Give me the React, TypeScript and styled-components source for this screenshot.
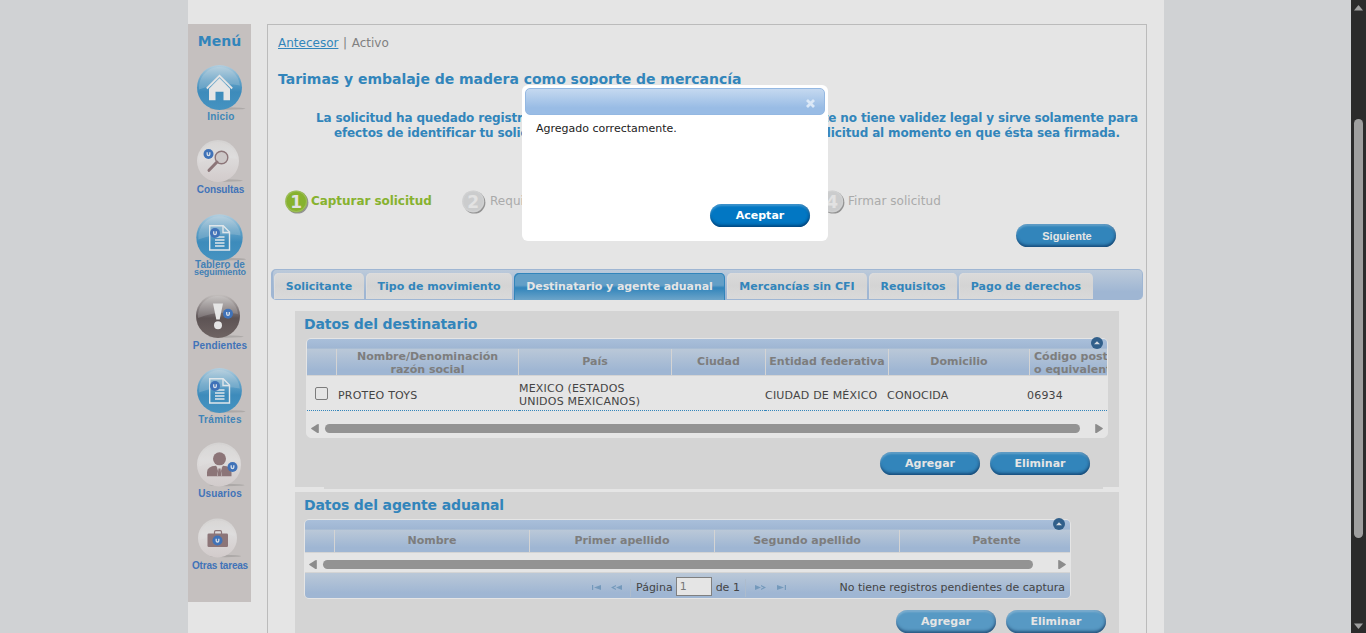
import React from 'react';
import styled, { createGlobalStyle, css } from 'styled-components';

const Global = createGlobalStyle`
  * { box-sizing: border-box; }
  html, body { margin: 0; padding: 0; overflow: hidden; }
  body { font-family: Verdana, "DejaVu Sans", sans-serif; font-size: 11px; color: #444; }
`;

const BLUE = '#3285bb';

const Page = styled.div`
  display: grid;
  grid-template-columns: 188px 976px 187px 15px;
  width: 1366px;
  height: 633px;
  overflow: hidden;
  background: #d0d2d4;
`;
const Container = styled.div`
  grid-column: 2;
  display: flex;
  align-items: flex-start;
  gap: 16px;
  height: 633px;
  padding-top: 24px;
  background: #e5e5e5;
`;
const Menu = styled.nav`
  width: 63px;
  height: 578px;
  flex: none;
  background: #c5c0bf;
`;
const MenuTitle = styled.div`
  height: 38px;
  line-height: 35px;
  text-align: center;
  font-weight: bold;
  font-size: 14px;
  color: ${BLUE};
`;
const MenuItem = styled.a<{ $h: number }>`
  display: block;
  height: ${p => p.$h}px;
`;
const MenuLabel = styled.div<{ $ls?: number; $tone?: string; $up?: number; $dx?: number }>`
  font: bold 10px/10px "Liberation Sans", Arial, sans-serif;
  letter-spacing: ${p => p.$ls ?? 0.3}px;
  color: ${p => p.$tone ?? '#4173b8'};
  text-align: center;
  white-space: nowrap;
  margin-top: ${p => -(p.$up ?? 0)}px;
  padding-left: ${p => p.$dx ?? 1}px;
`;
const SmallLine = styled.div`
  font-size: 9px;
  line-height: 5px;
  letter-spacing: -0.1px;
`;
const Icon = styled.svg`
  display: block;
`;

const Content = styled.main`
  width: 880px;
  height: 640px;
  border: 1px solid #bbb;
  padding: 0 3px;
  display: flex;
  flex-direction: column;
`;
const Crumbs = styled.div`
  height: 35px;
  padding: 1px 0 0 7px;
  line-height: 34px;
  font-size: 12px;
  word-spacing: 0.8px;
  color: #808080;
  a { color: ${BLUE}; text-decoration: underline; }
`;
const Title = styled.h1`
  margin: 0;
  height: 50px;
  padding: 9px 0 0 7px;
  font-size: 14px;
  line-height: 20px;
  letter-spacing: -0.02px;
  color: ${BLUE};
`;
const Notice = styled.div`
  height: 80px;
  padding-top: 1px;
  font-size: 12px;
  font-weight: bold;
  line-height: 15px;
  letter-spacing: -0.14px;
  color: ${BLUE};
  white-space: nowrap;
`;
const NoticeLine = styled.div<{ $w: number; $ml: number }>`
  display: flex;
  justify-content: space-between;
  width: ${p => p.$w}px;
  margin-left: ${p => p.$ml}px;
`;
const Steps = styled.div`
  display: grid;
  grid-template-columns: 177px 180px 180px 180px;
  height: 25px;
  padding-left: 14px;
`;
const Step = styled.div<{ $on?: boolean }>`
  display: flex;
  align-items: flex-start;
  gap: 1px;
  font-size: 12px;
  line-height: 22px;
  color: ${p => (p.$on ? '#87b22f' : '#aaa')};
  font-weight: ${p => (p.$on ? 'bold' : 'normal')};
  letter-spacing: ${p => (p.$on ? -0.05 : 0.05)}px;
  span { margin-left: ${p => (p.$on ? 0 : 2)}px; }
`;
const LastStep = styled(Step)`
  margin-left: -1px;
  span { margin-left: 1px; }
`;
const NextRow = styled.div`
  display: flex;
  height: 54px;
  padding: 9px 0 0 745px;
`;
const PillButton = styled.button<{ $tone?: 'bright' | 'pale'; $arial?: boolean }>`
  width: 100px;
  height: 23px;
  flex: none;
  border: 0;
  border-radius: 11.5px;
  padding: 1px 0 0;
  font: bold 11px/22px Verdana, "DejaVu Sans", sans-serif;
  ${p => p.$arial && css`font-family: "Liberation Sans", Arial, sans-serif; padding: 2px 0 0 2px; line-height: 21px;`}
  color: ${p => (p.$tone === 'bright' ? '#fff' : '#e5e5e5')};
  background: ${p => (p.$tone === 'bright' ? '#0277c3' : p.$tone === 'pale' ? '#5799c4' : BLUE)};
  box-shadow: inset 0 -3px 3px -1px rgba(0, 30, 70, 0.5), inset -2px 0 3px -1px rgba(0, 30, 70, 0.35),
    inset 0 2px 2px rgba(255, 255, 255, 0.25);
`;

const Tabs = styled.div`
  display: flex;
  gap: 2px;
  width: 872px;
  height: 31px;
  padding: 3px 0 0 1px;
  margin-bottom: 11px;
  border: 1px solid #9fb6d3;
  border-left-width: 2px;
  border-radius: 5px;
  background: linear-gradient(#bccada, #9fb6d3 75%);
`;
const Tab = styled.div<{ $w: number; $on?: boolean }>`
  width: ${p => p.$w}px;
  height: ${p => (p.$on ? 27 : 26)}px;
  flex: none;
  border-radius: 5px 5px 0 0;
  text-align: center;
  white-space: nowrap;
  font-weight: bold;
  line-height: 28px;
  letter-spacing: ${p => (p.$on ? -0.06 : 0)}px;
  color: ${p => (p.$on ? '#e5e5e5' : BLUE)};
  background: ${p =>
    p.$on ? 'linear-gradient(#639fc7 0 45%, #3285bb 55%, #6ca4c9)' : 'linear-gradient(#dadada, #d4d4d4 50%, #dadada)'};
  box-shadow: ${p => (p.$on ? 'inset 1px 1px 0 #3285bb, inset -1px 0 0 #3285bb' : 'inset 1px 1px 0 #dcdcdc')};
`;

const Panel = styled.section<{ $h: number }>`
  width: 824px;
  height: ${p => p.$h}px;
  flex: none;
  margin-left: 24px;
  background: #d4d4d4;
`;
const PanelTail = styled.div`
  width: 779px;
  height: 2px;
  flex: none;
  margin: 0 0 3px 53px;
  background: #d4d4d4;
`;
const PanelTitle = styled.h2`
  margin: 0;
  height: 27px;
  padding-left: 9px;
  line-height: 26px;
  font-size: 14px;
  letter-spacing: -0.12px;
  color: ${BLUE};
`;
const Grid = styled.div<{ $w: number; $ml: number }>`
  position: relative;
  width: ${p => p.$w}px;
  margin-left: ${p => p.$ml}px;
  border: 1px solid #e5e5e5;
  border-radius: 5px;
  background: #e5e5e5;
`;
const GridCap = styled.div<{ $h: number }>`
  height: ${p => p.$h}px;
  border-radius: 4px 4px 0 0;
  background: linear-gradient(#a9bfda, #9fb6d3);
  border-bottom: 1px solid #a9bdd4;
`;
const Collapse = styled.svg<{ $right: number }>`
  position: absolute;
  top: -2px;
  right: ${p => p.$right}px;
`;
const Cols = styled.div<{ $cols: string; $h: number }>`
  display: grid;
  grid-template-columns: ${p => p.$cols};
  height: ${p => p.$h}px;
  overflow: hidden;
`;
const HeadCols = styled(Cols)`
  background: linear-gradient(#bac8d8, #9fb6d3 80%);
  border-bottom: 1px solid #d4d4d4;
`;
const Head = styled.div<{ $two?: boolean }>`
  display: flex;
  align-items: center;
  justify-content: center;
  padding: ${p => (p.$two ? '1px 0 0' : '0 0 2px')};
  text-align: center;
  white-space: nowrap;
  overflow: hidden;
  font-weight: bold;
  line-height: 13px;
  color: #7d7d7d;
  border-right: 1px solid #d4d4d4;
  &:last-child { border-right: 0; }
`;
const HeadClipped = styled(Head)`
  justify-content: flex-start;
  text-align: left;
  padding-left: 4px;
`;
const Cell = styled.div`
  display: flex;
  align-items: center;
  line-height: 13px;
  letter-spacing: 0.2px;
  white-space: nowrap;
  overflow: hidden;
  padding-top: 4px;
  border-bottom: 1px dotted ${BLUE};
`;
const Check = styled.span`
  width: 13px;
  height: 13px;
  margin: -4px 0 0 8px;
  border: 1px solid #7c7c7c;
  border-radius: 2px;
`;
const HScroll = styled.div<{ $h: number; $pt: number }>`
  display: flex;
  height: ${p => p.$h}px;
  padding: ${p => p.$pt}px 4px 0 4px;
`;
const Thumb = styled.div<{ $w: number }>`
  width: ${p => p.$w}px;
  height: 9px;
  margin: 0 auto 0 6px;
  border-radius: 5px;
  background: #939393;
`;
const Actions = styled.div<{ $pt: number; $pl: number }>`
  display: flex;
  gap: 10px;
  padding: ${p => p.$pt}px 0 0 ${p => p.$pl}px;
`;
const Pager = styled.div`
  display: flex;
  align-items: center;
  height: 26px;
  padding: 4px 5px 0 286px;
  border-top: 1px solid #d4d4d4;
  border-radius: 0 0 4px 4px;
  background: linear-gradient(#bac8d8, #9fb6d3 80%);
  line-height: 21px;
  white-space: nowrap;
`;
const PageBox = styled.input`
  width: 36px;
  height: 19px;
  margin: -3px 4px 0 3px;
  padding: 0 3px;
  border: 1px solid #808080;
  background: #e5e5e5;
  color: #777;
  font: 11px Verdana, "DejaVu Sans", sans-serif;
`;
const PagerNote = styled.span`
  margin-left: auto;
`;

const Dialog = styled.div`
  position: absolute;
  left: 522px;
  top: 85px;
  width: 306px;
  height: 156px;
  padding: 3px;
  border-radius: 6px;
  background: #fff;
  color: #222;
`;
const DialogBar = styled.div`
  display: flex;
  justify-content: flex-end;
  align-items: center;
  height: 27px;
  padding: 3px 9px 0 0;
  border: 1px solid #94b8e2;
  border-radius: 5px;
  background: linear-gradient(#c5d9f0, #99bce5 75%);
`;
const DialogText = styled.div`
  height: 89px;
  padding: 6px 0 0 11px;
  line-height: 15px;
`;

const VScroll = styled.div`
  grid-column: 4;
  display: flex;
  flex-direction: column;
  align-items: center;
  height: 633px;
  padding: 5px 0 4px;
  background: #2b2b2b;
`;
const VThumb = styled.div`
  width: 9px;
  height: 419px;
  margin: 108px 0 auto;
  border-radius: 5px;
  background: #9f9f9f;
`;

const Defs = () => (
  <defs>
    <linearGradient id="blueBall" x1="0" y1="0" x2="0" y2="1">
      <stop offset="0" stopColor="#b4cfdf" />
      <stop offset="0.35" stopColor="#62a2c8" />
      <stop offset="0.6" stopColor="#3d8bbb" />
      <stop offset="1" stopColor="#4593c1" />
    </linearGradient>
    <linearGradient id="paleBall" x1="0" y1="0" x2="0" y2="1">
      <stop offset="0" stopColor="#d4d2d1" />
      <stop offset="0.4" stopColor="#dddbdb" />
      <stop offset="1" stopColor="#d2cbcb" />
    </linearGradient>
    <linearGradient id="darkBall" x1="0" y1="0" x2="0" y2="1">
      <stop offset="0" stopColor="#c6c2c0" />
      <stop offset="0.45" stopColor="#71686a" />
      <stop offset="0.55" stopColor="#5d5354" />
      <stop offset="1" stopColor="#6f6463" />
    </linearGradient>
  </defs>
);

type BallProps = { cx: number; cy: number; r: number; fill: string };
const Ball = ({ cx, cy, r, fill }: BallProps) => (
  <>
    <ellipse cx={cx + 8} cy={cy + r - 1.5} rx={r * 0.8} ry="1.2" fill="#a39f9e" opacity="0.7" />
    <circle cx={cx} cy={cy} r={r} fill={`url(#${fill})`} />
    <path
      d={`M${cx - r + 2} ${cy + 2}A${r - 2} ${r - 2} 0 0 1 ${cx + r - 2} ${cy - 2}Q${cx} ${cy - 6} ${cx - r + 2} ${cy + 2}Z`}
      fill="#e5e5e5"
      opacity="0.2"
    />
  </>
);

const Badge = ({ x, y }: { x: number; y: number }) => (
  <>
    <circle cx={x} cy={y} r="5" fill="#3f72b8" />
    <path d={`M${x - 1.3} ${y - 1.8}v2q0 1.3 1.3 1.3t1.3-1.3v-2`} fill="none" stroke="#d8dfe8" strokeWidth="1.3" />
  </>
);

const Doc = ({ y }: { y: number }) => (
  <g fill="none" stroke="#dfe6ea" strokeWidth="1.4">
    <path d={`M209.7 ${y - 12.3}h13.5l6.3 6.3v18h-19.8z`} />
    <path d={`M223 ${y - 12}v6.5h6.3`} />
    <path d={`M215 ${y - 1}h9.5M215 ${y + 2}h9.5M215 ${y + 5}h9.5M215 ${y + 8}h9.5`} />
  </g>
);

const Arrow = ({ dir }: { dir: 'left' | 'right' | 'up' | 'down' }) => {
  const horizontal = dir === 'left' || dir === 'right';
  const d = {
    left: 'M7.8 .3v8.400q-.8.500-1.800 0L.4 5q-.5-.5 0-1L6 .4q1-.5 1.800-.1z',
    right: 'M.2.3v8.400q.8.500 1.800 0L7.600 5q.5-.5 0-1L2 .4q-1-.5-1.800-.1z',
    up: 'M0 5.5L4 .6q.5-.5 1 0l4 4.900z',
    down: 'M0 .5l4 4.900q.5.5 1 0l4-4.900z',
  }[dir];
  return (
    <Icon width={horizontal ? 8 : 9} height={horizontal ? 9 : 6}>
      <path d={d} fill={horizontal ? '#8c8c8c' : '#9f9f9f'} />
    </Icon>
  );
};

const CollapseIcon = ({ right }: { right: number }) => (
  <Collapse width="12" height="12" $right={right}>
    <circle cx="6" cy="6" r="6" fill="#315f8a" />
    <path d="M3 7.300L6 4.200l3 3.100z" fill="#d5dbe1" />
  </Collapse>
);

const StepBall = ({ n, on }: { n: string; on?: boolean }) => (
  <Icon width="25" height="25">
    <circle cx="12.4" cy="12.600" r="11" fill="#777" opacity="0.75" />
    <circle cx="11.200" cy="11.400" r="11" fill={on ? '#87b22f' : '#cbcccd'} />
    <circle cx="11.200" cy="11.400" r="10.300" fill="none" stroke="#e5e5e5" strokeOpacity="0.22" strokeWidth="1.200" />
    <text x="11.200" y="17.500" fontSize="17" fontWeight="bold" textAnchor="middle" fill="#e2e2e2">{n}</text>
  </Icon>
);

const PagerIcon = ({ d }: { d: string }) => (
  <Icon width="12" height="7">
    <path d={d} fill="#7499bb" />
  </Icon>
);
const PagerGap = styled.span<{ $w: number }>`
  width: ${p => p.$w}px;
  flex: none;
`;
const PagerRule = styled.span`
  width: 1px;
  height: 18px;
  background: #adbccd;
`;

export default function App() {
  return (
    <>
      <Global />
      <Page>
        <Container>
          <Menu>
            <MenuTitle>Menú</MenuTitle>
            <MenuItem $h={74}>
              <Icon width="63" height="50" viewBox="188 62 63 50">
                <Defs />
                <Ball cx={219.5} cy={87.5} r={22.5} fill="blueBall" />
                <path d="M206.800 88.500L219.500 75.700L232.200 88.500" fill="none" stroke="#e5e5e5" strokeWidth="1.800" />
                <path d="M219.500 78.300l10.500 10.500v11.500h-6.500v-8.500h-8v8.500h-6.500V88.800z" fill="#e5e5e5" />
              </Icon>
              <MenuLabel $tone="#3d87b8" $ls={0.2} $dx={3}>Inicio</MenuLabel>
            </MenuItem>
            <MenuItem $h={74}>
              <Icon width="63" height="50" viewBox="188 136 63 50">
                <Ball cx={218} cy={161} r={21} fill="paleBall" />
                <circle cx="221.5" cy="157.5" r="6.300" fill="#cdc8c8" stroke="#8c7578" strokeWidth="1.400" />
                <path d="M217 162l-8 8.300" stroke="#8c7578" strokeWidth="3" strokeLinecap="round" />
                <Badge x={208.5} y={154} />
              </Icon>
              <MenuLabel $up={1} $dx={2} $ls={-0.1}>Consultas</MenuLabel>
            </MenuItem>
            <MenuItem $h={80}>
              <Icon width="63" height="51" viewBox="188 210 63 51">
                <Ball cx={219.5} cy={237.5} r={23.2} fill="blueBall" />
                <Doc y={238} />
                <Badge x={215} y={233} />
              </Icon>
              <MenuLabel $tone="#4380b5" $up={1} $ls={0}>
                Tablero de
                <SmallLine>seguimiento</SmallLine>
              </MenuLabel>
            </MenuItem>
            <MenuItem $h={74}>
              <Icon width="63" height="51" viewBox="188 290 63 51">
                <Ball cx={218} cy={316} r={22} fill="darkBall" />
                <path d="M213 303.500h10l-3.300 16h-3.400z" fill="#e5e5e5" />
                <circle cx="218" cy="325.200" r="4" fill="#e5e5e5" />
                <Badge x={228} y={313.8} />
              </Icon>
              <MenuLabel $ls={0.1}>Pendientes</MenuLabel>
            </MenuItem>
            <MenuItem $h={74}>
              <Icon width="63" height="51" viewBox="188 364 63 51">
                <Ball cx={219.5} cy={390.5} r={22.4} fill="blueBall" />
                <Doc y={391} />
                <Badge x={215} y={386} />
              </Icon>
              <MenuLabel $tone="#3f84b8">Trámites</MenuLabel>
            </MenuItem>
            <MenuItem $h={76}>
              <Icon width="63" height="51" viewBox="188 438 63 51">
                <Ball cx={219} cy={464.5} r={22} fill="paleBall" />
                <circle cx="219.500" cy="458.800" r="6.500" fill="#8c7578" />
                <path d="M207 476.300v-4q0-6 9-6.500l3.500 4 3.500-4q8.500.5 8.500 6.500v4z" fill="#8c7578" />
                <path d="M216.500 466l3 3 3-3-1.500 5 1 5h-5l1-5z" fill="#d8d4d4" />
                <path d="M218.500 468.500h2l1 7.500h-4z" fill="#8c7578" />
                <Badge x={232.5} y={467} />
              </Icon>
              <MenuLabel $ls={0.1}>Usuarios</MenuLabel>
            </MenuItem>
            <MenuItem $h={64}>
              <Icon width="63" height="48" viewBox="188 514 63 48">
                <Ball cx={217.5} cy={538} r={19.5} fill="paleBall" />
                <path d="M214.500 534v-2q0-1.300 1.300-1.300h4.400q1.300 0 1.300 1.300v2" fill="none" stroke="#8c7578" strokeWidth="1.200" />
                <rect x="207.500" y="533.500" width="20.500" height="13.500" rx="1.300" fill="#8c7578" />
                <Badge x={217.5} y={540.5} />
              </Icon>
              <MenuLabel $up={1} $ls={-0.2}>Otras tareas</MenuLabel>
            </MenuItem>
          </Menu>

          <Content>
            <Crumbs><a>Antecesor</a> | Activo</Crumbs>
            <Title>Tarimas y embalaje de madera como soporte de mercancía</Title>
            <Notice>
              <NoticeLine $w={822} $ml={45}>
                <span>La solicitud ha quedado registrada con el número</span>
                <span>temporal 50472418. Éste no tiene validez legal y sirve solamente para</span>
              </NoticeLine>
              <NoticeLine $w={786} $ml={63}>
                <span>efectos de identificar tu solicitud. Un folio oficial</span>
                <span>será asignado a la solicitud al momento en que ésta sea firmada.</span>
              </NoticeLine>
            </Notice>
            <Steps>
              <Step $on><StepBall n="1" on /><span>Capturar solicitud</span></Step>
              <Step><StepBall n="2" /><span>Requisitos</span></Step>
              <Step><StepBall n="3" /><span>Anexar</span></Step>
              <LastStep><StepBall n="4" /><span>Firmar solicitud</span></LastStep>
            </Steps>
            <NextRow><PillButton $arial>Siguiente</PillButton></NextRow>

            <Tabs>
              <Tab $w={90}>Solicitante</Tab>
              <Tab $w={146}>Tipo de movimiento</Tab>
              <Tab $w={211} $on>Destinatario y agente aduanal</Tab>
              <Tab $w={140}>Mercancías sin CFI</Tab>
              <Tab $w={88}>Requisitos</Tab>
              <Tab $w={134}>Pago de derechos</Tab>
            </Tabs>

            <Panel $h={176}>
              <PanelTitle>Datos del destinatario</PanelTitle>
              <Grid $w={802} $ml={11}>
                <GridCap $h={10} />
                <HeadCols $cols="30px 182px 153px 94px 123px 141px 77px" $h={27}>
                  <Head />
                  <Head $two>Nombre/Denominación<br />razón social</Head>
                  <Head>País</Head>
                  <Head>Ciudad</Head>
                  <Head>Entidad federativa</Head>
                  <Head>Domicilio</Head>
                  <HeadClipped $two>Código postal<br />o equivalente</HeadClipped>
                </HeadCols>
                <Cols $cols="31px 181px 246px 122px 140px 80px" $h={35}>
                  <Cell><Check /></Cell>
                  <Cell>PROTEO TOYS</Cell>
                  <Cell>MEXICO (ESTADOS<br />UNIDOS MEXICANOS)</Cell>
                  <Cell>CIUDAD DE MÉXICO</Cell>
                  <Cell>CONOCIDA</Cell>
                  <Cell>06934</Cell>
                </Cols>
                <HScroll $h={26} $pt={13}><Arrow dir="left" /><Thumb $w={755} /><Arrow dir="right" /></HScroll>
                <CollapseIcon right={4} />
              </Grid>
              <Actions $pt={14} $pl={585}>
                <PillButton>Agregar</PillButton>
                <PillButton>Eliminar</PillButton>
              </Actions>
            </Panel>
            <PanelTail />
            <Panel $h={160}>
              <PanelTitle>Datos del agente aduanal</PanelTitle>
              <Grid $w={767} $ml={9}>
                <GridCap $h={10} />
                <HeadCols $cols="30px 195px 185px 185px 193px" $h={23}>
                  <Head />
                  <Head>Nombre</Head>
                  <Head>Primer apellido</Head>
                  <Head>Segundo apellido</Head>
                  <Head>Patente</Head>
                </HeadCols>
                <HScroll $h={19} $pt={7}><Arrow dir="left" /><Thumb $w={710} /><Arrow dir="right" /></HScroll>
                <Pager>
                  <PagerIcon d="M1 1h1.200v5H1zM10 1v5L3 3.500z" />
                  <PagerGap $w={8} />
                  <PagerIcon d="M5 1v1.200L2.500 3.500 5 4.800V6L0 3.500zM11 1v5L5 3.500z" />
                  <PagerGap $w={7} />
                  <PagerRule />
                  <PagerGap $w={5} />
                  Página<PageBox defaultValue="1" />de 1
                  <PagerGap $w={5} />
                  <PagerRule />
                  <PagerGap $w={9} />
                  <PagerIcon d="M0 1v5l6-2.500zM6 1v1.200l2.500 1.300L6 4.800V6l5-2.500z" />
                  <PagerGap $w={10} />
                  <PagerIcon d="M0 1v5l7-2.500zM7.800 1H9v5H7.800z" />
                  <PagerNote>No tiene registros pendientes de captura</PagerNote>
                </Pager>
                <CollapseIcon right={5} />
              </Grid>
              <Actions $pt={11} $pl={601}>
                <PillButton $tone="pale">Agregar</PillButton>
                <PillButton $tone="pale">Eliminar</PillButton>
              </Actions>
            </Panel>
          </Content>
        </Container>
        <VScroll><Arrow dir="up" /><VThumb /><Arrow dir="down" /></VScroll>
      </Page>
      <Dialog>
        <DialogBar>
          <Icon width="9" height="9">
            <path d="M1 1l7 7M8 1L1 8" stroke="#dbe8f7" strokeWidth="2.800" />
          </Icon>
        </DialogBar>
        <DialogText>Agregado correctamente.</DialogText>
        <Actions $pt={0} $pl={185}><PillButton $tone="bright">Aceptar</PillButton></Actions>
      </Dialog>
    </>
  );
}
